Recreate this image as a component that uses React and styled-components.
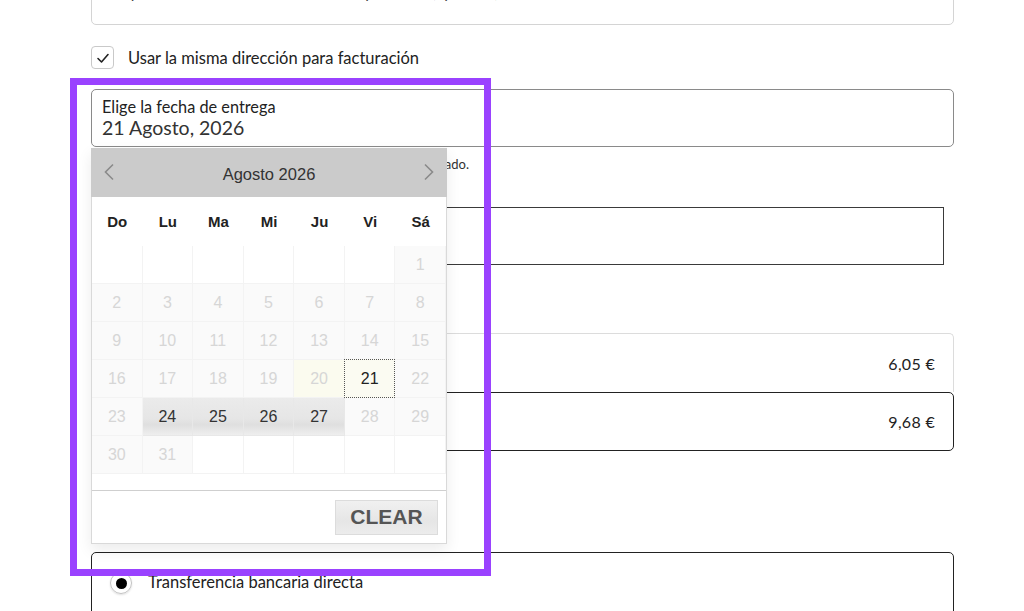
import React from "react";
import styled, { createGlobalStyle, css } from "styled-components";

const Global = createGlobalStyle`
  html, body { margin: 0; padding: 0; background: #fff; }
  body { font-family: Lato, "Open Sans", sans-serif; color: #1f1f1f; overflow: hidden; }
  * { box-sizing: border-box; }
`;

const Page = styled.div`
  position: relative;
  width: 1024px;
  height: 611px;
  overflow: hidden;
`;

const Column = styled.div`
  width: 863px;
  margin: -33px 0 0 91px;
  display: flex;
  flex-direction: column;
`;

const AddressField = styled.div`
  height: 58px;
  border: 1px solid #d4d4d4;
  border-radius: 5px;
  padding: 0 12px 9px 28px;
  display: flex;
  align-items: center;
  font-size: 16px;
  color: #444;
  white-space: nowrap;
`;

const CheckRow = styled.label`
  margin-top: 21px;
  display: flex;
  align-items: center;
  gap: 14px;
  height: 23px;
  font-size: 16.5px;
  color: #222;
`;

const CheckBox = styled.span`
  width: 23px;
  height: 23px;
  border: 1px solid #c9c9c9;
  border-radius: 4px;
  display: flex;
  align-items: center;
  justify-content: center;
  background: #fff;
`;

const DateField = styled.div`
  margin-top: 20px;
  height: 58px;
  border: 1px solid #8a8a8a;
  border-radius: 5px;
  padding: 8px 10px 0;
  display: flex;
  flex-direction: column;
`;

const FieldLabel = styled.span`
  font-size: 16.3px;
  line-height: 18px;
  color: #222;
`;

const FieldValue = styled.span`
  font-size: 19.5px;
  line-height: 23px;
  color: #333;
`;

const Hint = styled.p`
  margin: 10px 0 0;
  padding-left: 10px;
  font-size: 13px;
  line-height: 14px;
  color: #333;
  white-space: nowrap;
`;

const NotesBox = styled.div`
  margin: 36px 10px 0;
  height: 58px;
  border: 1px solid #3a3a3a;
`;

const OptionList = styled.div`
  margin-top: 68px;
  display: flex;
  flex-direction: column;
`;

const ShipOption = styled.div`
  height: 59px;
  display: flex;
  align-items: center;
  justify-content: flex-end;
  padding: 0 18px;
  color: #222;
  ${(p) =>
    p.$selected
      ? css`
          border: 1px solid #222;
          border-radius: 5px;
        `
      : css`
          border: 1px solid #dcdcdc;
          border-bottom: none;
          border-radius: 5px 5px 0 0;
        `}
`;

const Price = styled.span`
  font-size: 16px;
  letter-spacing: 0.3px;
`;

const PaymentBox = styled.div`
  margin-top: 101px;
  height: 90px;
  border: 1px solid #222;
  border-radius: 5px;
  padding: 19px 18px 0;
`;

const RadioRow = styled.div`
  display: flex;
  align-items: center;
  gap: 16px;
  font-size: 16.5px;
  line-height: 20px;
  color: #222;
`;

const RadioText = styled.span`
  margin-top: -3px;
`;

const Radio = styled.span`
  width: 22px;
  height: 22px;
  border-radius: 50%;
  border: 1px solid #c3c3c3;
  box-shadow: 0 1px 2px rgba(0, 0, 0, 0.12);
  display: flex;
  align-items: center;
  justify-content: center;
  &::after {
    content: "";
    width: 11px;
    height: 11px;
    border-radius: 50%;
    background: #000;
  }
`;

/* ---------- date picker popup (overlay) ---------- */

const Picker = styled.div`
  position: absolute;
  left: 91px;
  top: 148px;
  width: 356px;
  z-index: 5;
  background: #fff;
  border: 1px solid #d9d9d9;
  border-top: none;
  box-shadow: 0 6px 14px rgba(0, 0, 0, 0.08);
  font-family: "Liberation Sans", Arial, sans-serif;
  display: flex;
  flex-direction: column;
`;

const PickerHeader = styled.div`
  height: 49px;
  margin: 0 -1px;
  background: #cbcbcb;
  display: flex;
  align-items: center;
  justify-content: space-between;
  padding: 3px 12px 0;
`;

const MonthLabel = styled.span`
  font-size: 16.5px;
  color: #333;
`;

const NavArrow = styled.svg`
  width: 12px;
  height: 18px;
  display: block;
  margin-top: -4px;
`;

const WeekRow = styled.div`
  height: 49px;
  display: grid;
  grid-template-columns: repeat(7, 1fr);
  align-items: center;
`;

const WeekDay = styled.span`
  text-align: center;
  font-size: 15px;
  font-weight: 700;
  color: #222;
`;

const DayGrid = styled.div`
  display: grid;
  grid-template-columns: repeat(7, 1fr);
  grid-auto-rows: 38px;
`;

const Day = styled.div`
  display: flex;
  align-items: center;
  justify-content: center;
  padding-top: 1px;
  font-size: 16px;
  border-right: 1px solid #f3f3f3;
  border-bottom: 1px solid #f3f3f3;
  color: #d6d6d6;
  background: #fff;
  ${(p) =>
    p.$kind === "disabled" &&
    css`
      background: #fafafa;
    `}
  ${(p) =>
    p.$kind === "today" &&
    css`
      background: #fbfbef;
    `}
  ${(p) =>
    p.$kind === "open" &&
    css`
      color: #333;
      background: linear-gradient(
        to bottom,
        #ebebeb 0%,
        #e6e6e6 55%,
        #dfdfdf 72%,
        #eeeeee 100%
      );
      border-color: #e8e8e8;
    `}
  ${(p) =>
    p.$kind === "selected" &&
    css`
      color: #222;
      background: #fbfbf2;
      border: 1px dotted #555;
      margin: -1px 0 0 -1px;
    `}
`;

const PickerSpacer = styled.div`
  height: 16px;
`;

const PickerFooter = styled.div`
  height: 53px;
  border-top: 1px solid #cfcfcf;
  display: flex;
  align-items: center;
  justify-content: flex-end;
  padding-right: 8px;
`;

const ClearButton = styled.button`
  width: 103px;
  height: 35px;
  border: 1px solid #dcdcdc;
  background: linear-gradient(to bottom, #f0f0f0, #e6e6e6 60%, #ececec);
  font-family: "Liberation Sans", Arial, sans-serif;
  font-weight: 700;
  font-size: 21px;
  color: #555;
  padding: 0;
  cursor: pointer;
`;

const Highlight = styled.div`
  position: absolute;
  left: 70px;
  top: 78px;
  width: 421px;
  height: 498px;
  border: 7px solid #9a42ff;
  z-index: 10;
  pointer-events: none;
`;

const weekDays = ["Do", "Lu", "Ma", "Mi", "Ju", "Vi", "Sá"];

function buildDays() {
  const cells = [];
  for (let i = 0; i < 6; i++) cells.push({ key: "e" + i, label: "", kind: "empty" });
  for (let d = 1; d <= 31; d++) {
    let kind = "disabled";
    if (d === 20) kind = "today";
    if (d === 21) kind = "selected";
    if (d >= 24 && d <= 27) kind = "open";
    cells.push({ key: "d" + d, label: String(d), kind });
  }
  while (cells.length < 42) cells.push({ key: "e" + cells.length, label: "", kind: "empty" });
  return cells;
}

export default function App() {
  const days = buildDays();
  return (
    <Page>
      <Global />
      <Column>
        <AddressField>Apartamento, habitación, escalera, piso, etc. (opcional)</AddressField>
        <CheckRow>
          <CheckBox>
            <svg width="14" height="14" viewBox="0 0 14 14">
              <polyline points="2,7.5 5.5,11 12,3.5" fill="none" stroke="#222" strokeWidth="1.6" strokeLinecap="round" strokeLinejoin="round" />
            </svg>
          </CheckBox>
          Usar la misma dirección para facturación
        </CheckRow>
        <DateField>
          <FieldLabel>Elige la fecha de entrega</FieldLabel>
          <FieldValue>21 Agosto, 2026</FieldValue>
        </DateField>
        <Hint>Las entregas se realizan de lunes a viernes en el horario indicado.</Hint>
        <NotesBox />
        <OptionList>
          <ShipOption>
            <Price>6,05 €</Price>
          </ShipOption>
          <ShipOption $selected>
            <Price>9,68 €</Price>
          </ShipOption>
        </OptionList>
        <PaymentBox>
          <RadioRow>
            <Radio />
            <RadioText>Transferencia bancaria directa</RadioText>
          </RadioRow>
        </PaymentBox>
      </Column>

      <Picker>
        <PickerHeader>
          <NavArrow viewBox="0 0 12 18">
            <polyline points="10,1.5 2.5,9 10,16.5" fill="none" stroke="#8a8a8a" strokeWidth="1.6" />
          </NavArrow>
          <MonthLabel>Agosto 2026</MonthLabel>
          <NavArrow viewBox="0 0 12 18">
            <polyline points="2,1.5 9.5,9 2,16.5" fill="none" stroke="#8a8a8a" strokeWidth="1.6" />
          </NavArrow>
        </PickerHeader>
        <WeekRow>
          {weekDays.map((w) => (
            <WeekDay key={w}>{w}</WeekDay>
          ))}
        </WeekRow>
        <DayGrid>
          {days.map((c) => (
            <Day key={c.key} $kind={c.kind}>
              {c.label}
            </Day>
          ))}
        </DayGrid>
        <PickerSpacer />
        <PickerFooter>
          <ClearButton type="button">CLEAR</ClearButton>
        </PickerFooter>
      </Picker>

      <Highlight />
    </Page>
  );
}
